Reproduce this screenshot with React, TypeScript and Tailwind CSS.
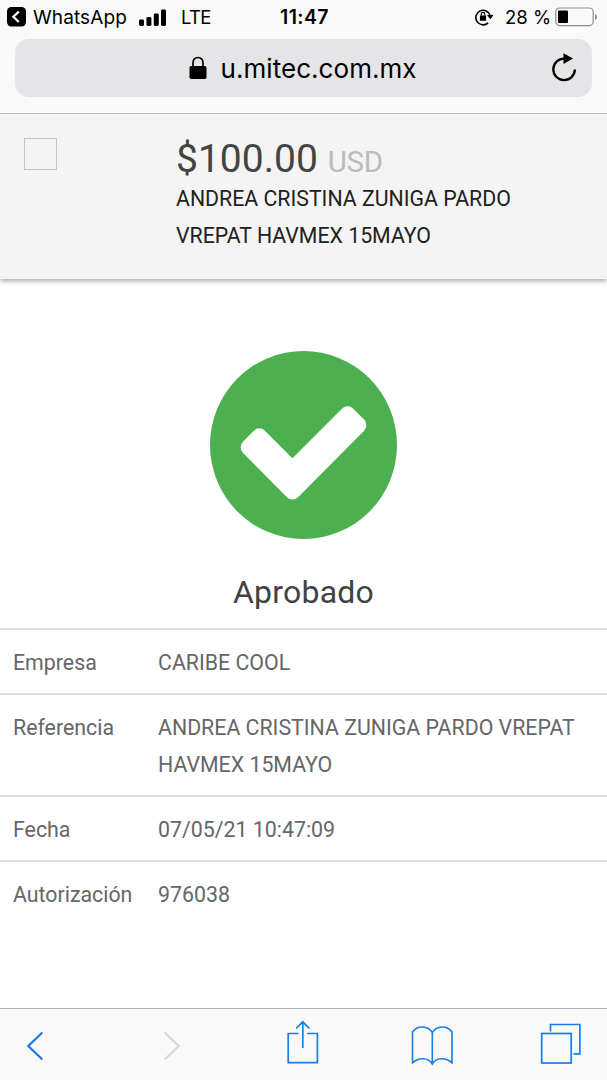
import React from "react";

type Detail = { label: string; value: string; rowClass: string };

const details: Detail[] = [
  { label: "Empresa", value: "CARIBE COOL", rowClass: "h-[65px]" },
  { label: "Referencia", value: "ANDREA CRISTINA ZUNIGA PARDO VREPAT HAVMEX 15MAYO", rowClass: "h-[102px]" },
  { label: "Fecha", value: "07/05/21 10:47:09", rowClass: "h-[65px]" },
  { label: "Autorización", value: "976038", rowClass: "h-[65px]" },
];

function StatusBar() {
  return (
    <div className="flex h-[34px] shrink-0 items-center text-[18.5px] leading-none text-black">
      <div className="flex w-[280px] items-center pl-[7px]">
        <svg className="h-[20px] w-[19px]" viewBox="0 0 19 20">
          <rect width="19" height="19.5" rx="4.5" fill="#000" />
          <path d="M11.8 4.6 6.4 9.8l5.4 5.2" fill="none" stroke="#fff" strokeWidth="2.2" />
        </svg>
        <span className="ml-[7px] w-[94px] whitespace-nowrap text-[19px] tracking-[0.1px]">WhatsApp</span>
        <svg className="ml-[12px] h-[17px] w-[27px]" viewBox="0 0 27 17">
          <rect x="0" y="10.5" width="5" height="6.5" rx="1.4" />
          <rect x="7.4" y="8" width="5" height="9" rx="1.4" />
          <rect x="14.8" y="4.5" width="5" height="12.5" rx="1.4" />
          <rect x="22" y="0.5" width="5" height="16.5" rx="1.4" />
        </svg>
        <span className="ml-[15px] tracking-[-0.7px]">LTE</span>
      </div>
      <div className="w-[195px] pt-[2px] text-[19.5px] font-semibold tracking-[0.4px]">11:47</div>
      <svg className="h-[18px] w-[19px]" viewBox="0 0 19 18">
        <path d="M13.2 14.8A7.3 7.3 0 1 1 15.2 7.6" fill="none" stroke="#000" strokeWidth="1.6" />
        <path d="M11.9 7H18.5L15.4 11.2z" />
        <rect x="4.9" y="7.4" width="6.2" height="5.4" rx="0.6" />
        <path d="M6.2 7.8V6.2a1.8 1.8 0 0 1 3.6 0V7.8" fill="none" stroke="#000" strokeWidth="1.1" />
      </svg>
      <span className="ml-[11px] w-[45px] whitespace-nowrap">28 %</span>
      <svg className="ml-[5px] h-[20px] w-[43px]" viewBox="0 0 43 20">
        <rect x="0.8" y="1" width="37.4" height="17.6" rx="4" fill="none" stroke="#8d8d8f" strokeWidth="1.2" />
        <rect x="3" y="3.5" width="10" height="12.5" rx="1" />
        <path d="M40 7v6c1.3-.4 2-1.6 2-3s-.7-2.6-2-3z" fill="#8d8d8f" />
      </svg>
    </div>
  );
}

function AddressBar() {
  return (
    <div className="ml-[15px] mt-[5px] flex h-[58px] w-[577px] shrink-0 items-center rounded-[14px] bg-[#e5e5e7] text-black">
      <svg className="ml-[173.5px] h-[24px] w-[18px]" viewBox="0 0 18 24">
        <rect x="0.5" y="10" width="17" height="13" rx="1.8" />
        <path d="M4 11V6.5a5 5 0 0 1 10 0V11" fill="none" stroke="#000" strokeWidth="1.7" />
      </svg>
      <span className="ml-[14px] w-[330.5px] pt-px text-[26px] leading-none tracking-[0.05px]">u.mitec.com.mx</span>
      <svg className="h-[30px] w-[26px]" viewBox="0 0 26 30">
        <path d="M13.5 5.6A10.8 10.8 0 1 0 23.9 16.6" fill="none" stroke="#000" strokeWidth="2.3" />
        <path d="M12.5 0.3V11.1L22 5.6z" />
      </svg>
    </div>
  );
}

function PaymentHeader() {
  return (
    <header className="relative z-10 flex h-[165px] shrink-0 bg-[#f4f4f4] font-['Roboto',sans-serif] shadow-[0_2px_5px_rgba(0,0,0,0.35)]">
      <div className="ml-[24px] mt-[24px] h-[32px] w-[33px] border border-[#c4c4c4]" />
      <div className="ml-[119px] mt-[22px]">
        <div className="flex h-[44px] items-baseline whitespace-nowrap pt-px leading-[44px]">
          <span className="text-[39px] text-[#444]">$100.00</span>
          <span className="ml-[10px] text-[29.5px] tracking-[-0.4px] text-[#bbb]">USD</span>
        </div>
        <div className="w-[350px] text-[21.3px] leading-[37.3px] text-[#212121]">
          ANDREA CRISTINA ZUNIGA PARDO VREPAT HAVMEX 15MAYO
        </div>
      </div>
    </header>
  );
}

function Toolbar() {
  return (
    <nav className="flex h-[72px] shrink-0 items-start border-t border-[#b4b4b6] bg-[#f9f9f9]">
      <svg className="ml-[26px] mt-[22px] h-[30px] w-[18px]" viewBox="0 0 18 30" fill="none">
        <path d="M16.3 1.5 2.3 15l14 13.5" stroke="#157ae8" strokeWidth="2.2" />
      </svg>
      <svg className="ml-[119px] mt-[22px] h-[30px] w-[18px]" viewBox="0 0 18 30" fill="none">
        <path d="M1.7 1.5 15.7 15l-14 13.5" stroke="#d8d8d9" strokeWidth="2.2" />
      </svg>
      <svg className="ml-[105px] mt-[11px] h-[45px] w-[34px]" viewBox="0 0 34 45" fill="none" stroke="#1a7de8" strokeWidth="1.7">
        <path d="M12.5 13.5H2.2v29.2h29.2V13.5H21M16.8 28V2M10.2 8.5l6.6-6.7 6.6 6.7" />
      </svg>
      <svg className="ml-[90px] mt-[15px] h-[42px] w-[44px]" viewBox="0 0 44 42" fill="none" stroke="#1a7de8" strokeWidth="1.6">
        <path d="M22.3 40V8.5C18 1.5 7.5 1 2.5 8V38.8C8.5 33.5 18 33 22.3 40C26.5 33 36 33.5 42 38.8V8C37 1 26.5 1.5 22.3 8.5" />
      </svg>
      <svg className="ml-[86px] mt-[13px] h-[44px] w-[44px]" viewBox="0 0 44 44" fill="none" stroke="#1a7de8" strokeWidth="1.7">
        <rect x="1.7" y="11.5" width="29.5" height="29.5" />
        <path d="M10.5 9.5V2.5h29.4v29.3H33.5" />
      </svg>
    </nav>
  );
}

export default function App() {
  return (
    <div className="flex h-[1080px] w-[607px] flex-col overflow-hidden bg-white font-['Inter',sans-serif]">
      <div className="relative z-20 flex h-[114px] shrink-0 flex-col border-b border-[#bcbcbe] bg-[#f9f9f9]">
        <StatusBar />
        <AddressBar />
      </div>
      <PaymentHeader />
      <main className="flex flex-1 flex-col bg-white pt-[72px] font-['Roboto',sans-serif]">
        <svg className="mx-auto h-[188px] w-[187px] shrink-0" viewBox="128 128 1536 1536" preserveAspectRatio="none">
          <circle cx="896" cy="896" r="768" fill="#4caf50" />
          <path
            fill="#fff"
            d="M1412 734q0-28-18-46l-91-90q-19-19-45-19t-45 19l-408 407-226-226q-19-19-45-19t-45 19l-91 90q-18 18-18 46 0 27 18 45l362 362q19 19 45 19 27 0 46-19l543-543q18-18 18-45z"
          />
        </svg>
        <h1 className="mt-[33px] h-[56px] text-center text-[32px] leading-[40px] tracking-[0.2px] text-[#424242]">Aprobado</h1>
        <dl className="text-[21.33px] leading-[37.3px] text-[#666]">
          {details.map((d) => (
            <div key={d.label} className={`flex border-t-2 border-[#dfdfdf] pl-[13px] pt-[13.6px] ${d.rowClass}`}>
              <dt className="w-[145px] shrink-0">{d.label}</dt>
              <dd className="w-[425px]">{d.value}</dd>
            </div>
          ))}
        </dl>
      </main>
      <Toolbar />
    </div>
  );
}
